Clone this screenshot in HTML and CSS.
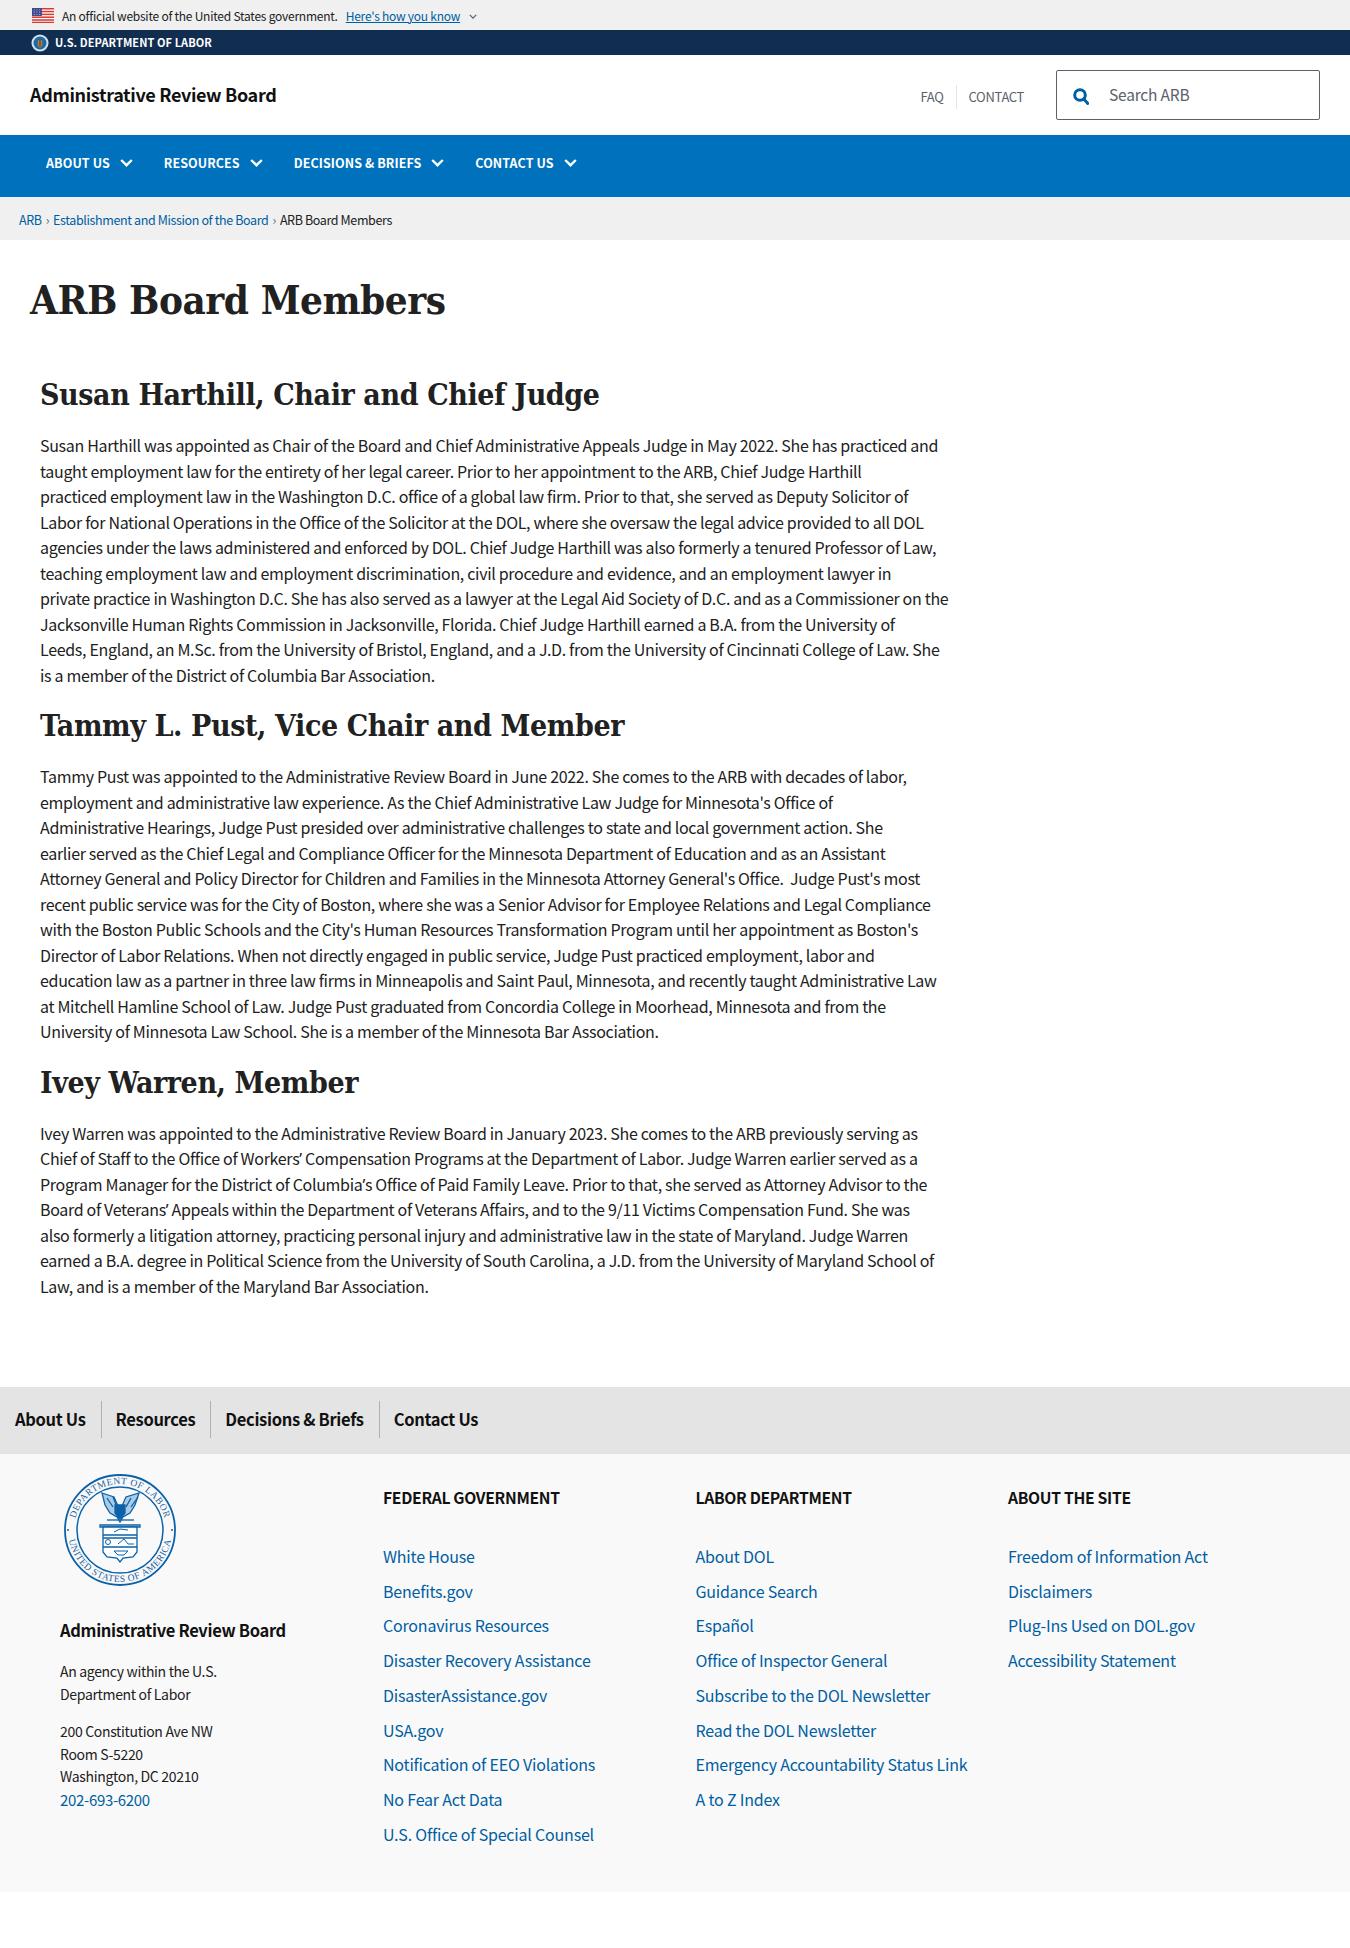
FILE: index.html
```html
<!DOCTYPE html>
<html lang="en">
<head>
<meta charset="utf-8">
<title>ARB Board Members</title>
<link rel="stylesheet" href="styles.css">
</head>
<body>
<div class="banner">
  <svg class="flag" viewBox="0 0 20 16" width="22" height="15" preserveAspectRatio="none"><rect width="20" height="16" fill="#fff"/><g fill="#d83933"><rect width="20" height="1.6"/><rect y="3" width="20" height="1.6"/><rect y="6" width="20" height="1.6"/><rect y="9" width="20" height="1.6"/><rect y="12" width="20" height="1.6"/><rect y="14.6" width="20" height="1.4"/></g><rect width="9" height="8.5" fill="#3c4a8c"/><g fill="#fff"><circle cx="2" cy="2" r=".5"/><circle cx="4.5" cy="2" r=".5"/><circle cx="7" cy="2" r=".5"/><circle cx="2" cy="4.3" r=".5"/><circle cx="4.5" cy="4.3" r=".5"/><circle cx="7" cy="4.3" r=".5"/><circle cx="2" cy="6.6" r=".5"/><circle cx="4.5" cy="6.6" r=".5"/><circle cx="7" cy="6.6" r=".5"/></g></svg>
  <span class="banner-text">An official website of the United States government.</span>
  <a class="banner-link" href="#">Here's how you know</a>
  <svg class="banner-chev" viewBox="0 0 10 6" width="8" height="5"><path d="M1 1l4 4 4-4" fill="none" stroke="#5b616b" stroke-width="1.6"/></svg>
</div>
<div class="dol-bar">
  <svg class="dol-seal" viewBox="0 0 20 20" width="18" height="18"><circle cx="10" cy="10" r="9.5" fill="#cfe0ee"/><circle cx="10" cy="10" r="7.2" fill="#1a6aa8"/><path d="M7.5 7h5v5.5l-2.5 3-2.5-3z" fill="#b5803a"/><path d="M9.3 6h1.4v8H9.3z" fill="#7a3b1e"/></svg>
  <span class="dol-name">U.S. DEPARTMENT OF LABOR</span>
</div>
<header class="site-header">
  <a class="site-title" href="#">Administrative Review Board</a>
  <div class="header-right">
    <nav class="util-nav"><a class="util-link util-first" href="#">FAQ</a><a class="util-link" href="#">CONTACT</a></nav>
    <div class="search">
      <svg class="search-icon" viewBox="0 0 16 17" width="16" height="17"><circle cx="7" cy="7" r="5.300" fill="none" stroke="#005ea2" stroke-width="3"/><path d="M10.800 11l4 4.400" stroke="#005ea2" stroke-width="3" stroke-linecap="round"/></svg>
      <span class="search-ph">Search ARB</span>
    </div>
  </div>
</header>
<nav class="main-nav">
  <a class="nav-item" href="#">ABOUT US<svg class="nav-chev" viewBox="0 0 13 8" width="13" height="8"><path d="M1.200 1L6.500 6.200 11.800 1" fill="none" stroke="#fff" stroke-width="2.400"/></svg></a>
  <a class="nav-item" href="#">RESOURCES<svg class="nav-chev" viewBox="0 0 13 8" width="13" height="8"><path d="M1.200 1L6.500 6.200 11.800 1" fill="none" stroke="#fff" stroke-width="2.400"/></svg></a>
  <a class="nav-item" href="#">DECISIONS &amp; BRIEFS<svg class="nav-chev" viewBox="0 0 13 8" width="13" height="8"><path d="M1.200 1L6.500 6.200 11.800 1" fill="none" stroke="#fff" stroke-width="2.400"/></svg></a>
  <a class="nav-item" href="#">CONTACT US<svg class="nav-chev" viewBox="0 0 13 8" width="13" height="8"><path d="M1.200 1L6.500 6.200 11.800 1" fill="none" stroke="#fff" stroke-width="2.400"/></svg></a>
</nav>
<div class="crumbs"><a href="#">ARB</a><span class="crumb-sep">›</span><a href="#">Establishment and Mission of the Board</a><span class="crumb-sep">›</span><span class="crumb-current">ARB Board Members</span></div>
<main class="content">
  <h1 class="page-title">ARB Board Members</h1>
  <article class="bios">
    <h2 class="bio-name">Susan Harthill, Chair and Chief Judge</h2>
    <p class="bio-text">Susan Harthill was appointed as Chair of the Board and Chief Administrative Appeals Judge in May 2022. She has practiced and<br>
taught employment law for the entirety of her legal career. Prior to her appointment to the ARB, Chief Judge Harthill<br>
practiced employment law in the Washington D.C. office of a global law firm. Prior to that, she served as Deputy Solicitor of<br>
Labor for National Operations in the Office of the Solicitor at the DOL, where she oversaw the legal advice provided to all DOL<br>
agencies under the laws administered and enforced by DOL. Chief Judge Harthill was also formerly a tenured Professor of Law,<br>
teaching employment law and employment discrimination, civil procedure and evidence, and an employment lawyer in<br>
private practice in Washington D.C. She has also served as a lawyer at the Legal Aid Society of D.C. and as a Commissioner on the<br>
Jacksonville Human Rights Commission in Jacksonville, Florida. Chief Judge Harthill earned a B.A. from the University of<br>
Leeds, England, an M.Sc. from the University of Bristol, England, and a J.D. from the University of Cincinnati College of Law. She<br>
is a member of the District of Columbia Bar Association.</p>
    <h2 class="bio-name">Tammy L. Pust, Vice Chair and Member</h2>
    <p class="bio-text">Tammy Pust was appointed to the Administrative Review Board in June 2022. She comes to the ARB with decades of labor,<br>
employment and administrative law experience. As the Chief Administrative Law Judge for Minnesota's Office of<br>
Administrative Hearings, Judge Pust presided over administrative challenges to state and local government action. She<br>
earlier served as the Chief Legal and Compliance Officer for the Minnesota Department of Education and as an Assistant<br>
Attorney General and Policy Director for Children and Families in the Minnesota Attorney General's Office.&nbsp; Judge Pust's most<br>
recent public service was for the City of Boston, where she was a Senior Advisor for Employee Relations and Legal Compliance<br>
with the Boston Public Schools and the City's Human Resources Transformation Program until her appointment as Boston's<br>
Director of Labor Relations. When not directly engaged in public service, Judge Pust practiced employment, labor and<br>
education law as a partner in three law firms in Minneapolis and Saint Paul, Minnesota, and recently taught Administrative Law<br>
at Mitchell Hamline School of Law. Judge Pust graduated from Concordia College in Moorhead, Minnesota and from the<br>
University of Minnesota Law School. She is a member of the Minnesota Bar Association.</p>
    <h2 class="bio-name">Ivey Warren, Member</h2>
    <p class="bio-text">Ivey Warren was appointed to the Administrative Review Board in January 2023. She comes to the ARB previously serving as<br>
Chief of Staff to the Office of Workers<span class="apos">’</span> Compensation Programs at the Department of Labor. Judge Warren earlier served as a<br>
Program Manager for the District of Columbia<span class="apos">’</span>s Office of Paid Family Leave. Prior to that, she served as Attorney Advisor to the<br>
Board of Veterans<span class="apos">’</span> Appeals within the Department of Veterans Affairs, and to the 9/11 Victims Compensation Fund. She was<br>
also formerly a litigation attorney, practicing personal injury and administrative law in the state of Maryland. Judge Warren<br>
earned a B.A. degree in Political Science from the University of South Carolina, a J.D. from the University of Maryland School of<br>
Law, and is a member of the Maryland Bar Association.</p>
  </article>
</main>
<nav class="foot-nav">
  <a class="foot-nav-item" href="#">About Us</a>
  <a class="foot-nav-item" href="#">Resources</a>
  <a class="foot-nav-item" href="#">Decisions &amp; Briefs</a>
  <a class="foot-nav-item" href="#">Contact Us</a>
</nav>
<footer class="footer">
  <div class="foot-agency">
    <svg class="foot-seal" viewBox="0 0 120 120" width="120" height="120">
      <defs>
        <path id="arcTop" d="M14 60a46 46 0 0 1 92 0"/>
        <path id="arcBot" d="M8 60a52 52 0 0 0 104 0"/>
      </defs>
      <g fill="none" stroke="#0b62a8">
        <circle cx="60" cy="60" r="55" stroke-width="1.800"/>
        <circle cx="60" cy="60" r="43" stroke-width="1.500"/>
      </g>
      <text class="seal-text"><textPath href="#arcTop" startOffset="50%" text-anchor="middle">DEPARTMENT OF LABOR</textPath></text>
      <text class="seal-text"><textPath href="#arcBot" startOffset="50%" text-anchor="middle">UNITED STATES OF AMERICA</textPath></text>
      <circle cx="8" cy="60" r="1" fill="#0b62a8"/><circle cx="112" cy="60" r="1" fill="#0b62a8"/>
      <g fill="none" stroke="#0b62a8" stroke-width="1.300">
        <path d="M42 23l12 4 4 9 2 2 2-2 4-9 13-4-4 12-5 8-7 4-3 5-3-5-7-4-5-8z" fill="#a9cbe6"/>
        <path d="M47 28l6 9M53 27l4 10M78 27l-7 10M71 28l-5 9"/>
        <path d="M55 35h10v8l-5 6-5-6z" fill="#0b62a8"/>
        <path d="M47 50h27"/>
        <path d="M40 55h40v2H40z" fill="#fff"/>
        <path d="M43 57h34v25l-4 5-10 1-3 4-3-4-10-1-4-5z" fill="#fff"/>
        <path d="M43 65h34M43 68h34M43 77h34"/>
        <path d="M54 62l6-3 8 1M58 74l6-5 4 5h6M54 81h14l-4 4h-6z" stroke-width="1"/>
        <circle cx="48" cy="72" r="2.500" stroke-width="1"/>
      </g>
    </svg>
    <h3 class="foot-name">Administrative Review Board</h3>
    <p class="foot-p">An agency within the U.S.<br>Department of Labor</p>
    <p class="foot-p foot-addr">200 Constitution Ave NW<br>Room S-5220<br>Washington, DC 20210</p>
    <a class="foot-phone" href="#">202-693-6200</a>
  </div>
  <div class="foot-col">
    <h4 class="foot-head">FEDERAL GOVERNMENT</h4>
    <a class="foot-link" href="#">White House</a>
    <a class="foot-link" href="#">Benefits.gov</a>
    <a class="foot-link" href="#">Coronavirus Resources</a>
    <a class="foot-link" href="#">Disaster Recovery Assistance</a>
    <a class="foot-link" href="#">DisasterAssistance.gov</a>
    <a class="foot-link" href="#">USA.gov</a>
    <a class="foot-link" href="#">Notification of EEO Violations</a>
    <a class="foot-link" href="#">No Fear Act Data</a>
    <a class="foot-link" href="#">U.S. Office of Special Counsel</a>
  </div>
  <div class="foot-col">
    <h4 class="foot-head">LABOR DEPARTMENT</h4>
    <a class="foot-link" href="#">About DOL</a>
    <a class="foot-link" href="#">Guidance Search</a>
    <a class="foot-link" href="#">Español</a>
    <a class="foot-link" href="#">Office of Inspector General</a>
    <a class="foot-link" href="#">Subscribe to the DOL Newsletter</a>
    <a class="foot-link" href="#">Read the DOL Newsletter</a>
    <a class="foot-link" href="#">Emergency Accountability Status Link</a>
    <a class="foot-link" href="#">A to Z Index</a>
  </div>
  <div class="foot-col">
    <h4 class="foot-head">ABOUT THE SITE</h4>
    <a class="foot-link" href="#">Freedom of Information Act</a>
    <a class="foot-link" href="#">Disclaimers</a>
    <a class="foot-link" href="#">Plug-Ins Used on DOL.gov</a>
    <a class="foot-link" href="#">Accessibility Statement</a>
  </div>
</footer>
</body>
</html>
```
FILE: styles.css
```css
* { box-sizing: border-box; }
html, body { margin: 0; padding: 0; }
body { background: #fff; color: #212121; font-family: "Noto Sans CJK SC", "Noto Sans", sans-serif; font-size: 16px; letter-spacing: -.02em; }
a { text-decoration: none; }
.apos { font-family: "Noto Sans", sans-serif; line-height: 0; }

.banner { height: 30px; background: #f0f0f0; display: flex; align-items: center; padding-left: 32px; font-size: 12px; letter-spacing: -.24px; color: #212121; }
.flag { margin-right: 8px; }
.banner-text { margin-right: 8px; }
.banner-link { color: #005ea2; text-decoration: underline; }
.banner-chev { margin-left: 9px; margin-top: 3px; }

.dol-bar { height: 25px; background: #112e51; display: flex; align-items: center; padding-left: 31px; }
.dol-seal { margin-right: 6px; margin-top: 1px; }
.dol-name { color: #fff; font-size: 11px; font-weight: 700; letter-spacing: .08px; margin-bottom: 2px; }

.site-header { height: 80px; display: flex; justify-content: space-between; align-items: center; padding: 0 30px; }
.site-title { color: #111; font-weight: 700; font-size: 18px; letter-spacing: -.35px; margin-top: -2px; }
.header-right { display: flex; align-items: center; }
.util-nav { display: flex; align-items: center; margin-right: 20px; margin-top: 3px; }
.util-link { color: #5b616b; font-size: 13px; padding: 0 12px; line-height: 24px; }
.util-first { border-right: 1px solid #e4e4e4; }
.search { width: 264px; height: 50px; border: 1px solid #5b616b; border-radius: 2px; display: flex; align-items: center; padding-left: 16px; }
.search-icon { margin-right: 20px; margin-top: 3px; }
.search-ph { color: #5b616b; font-size: 15.500px; letter-spacing: -.2px; margin-top: -2px; }

.main-nav { height: 62px; background: #0071bc; display: flex; align-items: flex-start; padding-left: 46px; padding-top: 17px; }
.nav-item { color: #fff; font-size: 12.500px; font-weight: 700; letter-spacing: .08px; display: flex; align-items: center; margin-right: 31px; line-height: 22px; }
.nav-chev { margin-left: 10px; }

.crumbs { height: 43px; background: #f0f0f0; display: flex; align-items: center; padding: 2px 0 0 19px; font-size: 12.500px; letter-spacing: -.03em; }
.crumbs a { color: #005ea2; }
.crumb-sep { color: #5b616b; margin: 0 4px; }
.crumb-current { color: #212121; }

.content { padding: 0 30px; height: 1147px; }
.page-title { font-family: "DejaVu Serif Condensed", "DejaVu Serif", serif; font-size: 40px; font-weight: 700; margin: 0; padding-top: 32px; line-height: 56px; color: #212121; letter-spacing: -.45px; }
.bios { width: 925px; padding: 0 10px; margin-top: 45px; }
.bio-name { font-family: "DejaVu Serif Condensed", "DejaVu Serif", serif; font-size: 30px; font-weight: 700; margin: 0 0 16px; line-height: 44px; color: #212121; letter-spacing: -.4px; }
.bio-text { font-size: 16px; line-height: 25.500px; margin: 0 0 16px; color: #212121; letter-spacing: -.32px; white-space: nowrap; }

.foot-nav { height: 67px; background: #e4e4e4; display: flex; align-items: center; padding-left: 15px; }
.foot-nav-item { color: #111; font-size: 16.500px; font-weight: 700; line-height: 37px; padding-right: 15px; margin-right: 14px; margin-top: -2px; border-right: 1px solid #aeb0b5; }
.foot-nav-item:last-child { border-right: 0; }

.footer { height: 438px; background: #f9f9f9; display: flex; padding-top: 16px; }
.foot-agency { width: 383px; padding-left: 60px; }
.foot-seal { display: block; }
.seal-text { font-family: "Liberation Serif", serif; font-size: 9.500px; fill: #1a5f9e; letter-spacing: .5px; }
.foot-name { font-size: 16.500px; font-weight: 700; margin: 28px 0 18px; color: #111; line-height: 24px; }
.foot-p { font-size: 14px; line-height: 22.500px; margin: 0 0 15px; }
.foot-addr { margin-bottom: -1px; }
.foot-phone { color: #005ea2; font-size: 15px; line-height: 25px; display: block; }
.foot-col { width: 312.500px; display: flex; flex-direction: column; padding-top: 16px; }
.foot-head { font-size: 15.700px; font-weight: 700; margin: 0 0 29px; color: #111; line-height: 24px; }
.foot-link { color: #005ea2; font-size: 16px; line-height: 34.700px; letter-spacing: -.2px; }
```
